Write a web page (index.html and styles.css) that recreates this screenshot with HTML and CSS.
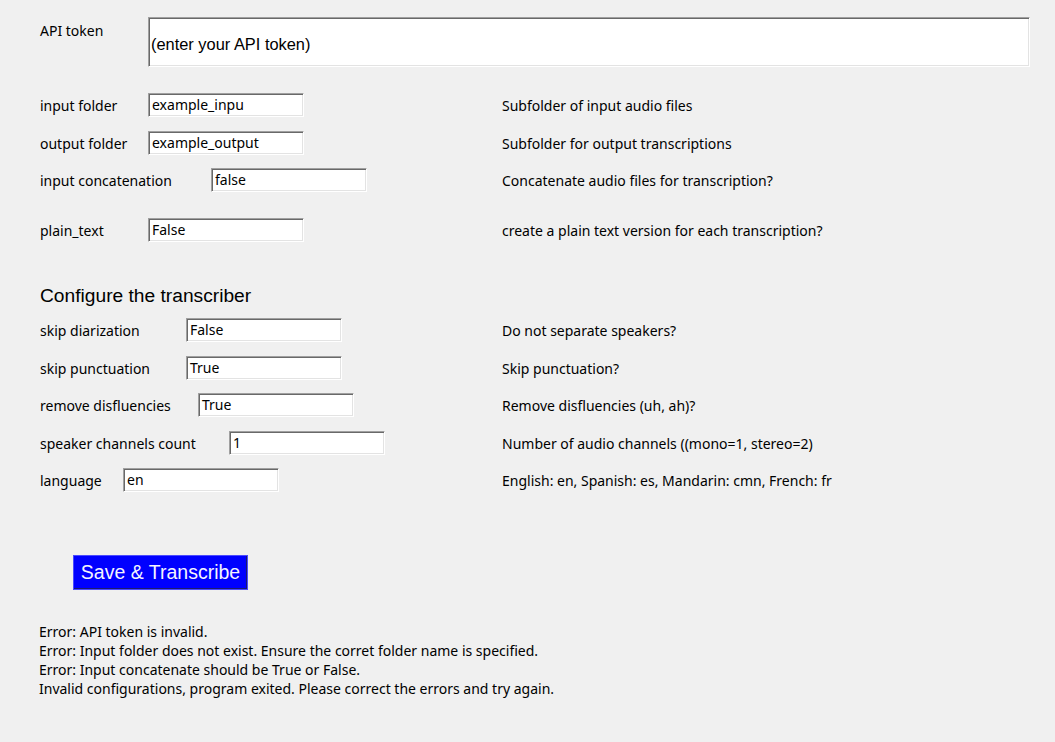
FILE: index.html
```html
<!DOCTYPE html>
<html>
<head>
<meta charset="utf-8">
<link rel="stylesheet" href="styles.css">
</head>
<body>
<div class="page">
  <div class="api-row">
    <div class="api-label">API token</div>
    <div class="entry entry-big">(enter your API token)</div>
  </div>

  <div class="row r1">
    <div class="left"><span class="lbl w108">input folder</span><div class="entry">example_inpu</div></div>
    <div class="desc">Subfolder of input audio files</div>
  </div>
  <div class="row r2">
    <div class="left"><span class="lbl w108">output folder</span><div class="entry">example_output</div></div>
    <div class="desc">Subfolder for output transcriptions</div>
  </div>
  <div class="row r3">
    <div class="left"><span class="lbl w171">input concatenation</span><div class="entry">false</div></div>
    <div class="desc">Concatenate audio files for transcription?</div>
  </div>
  <div class="row r4">
    <div class="left"><span class="lbl w108">plain_text</span><div class="entry">False</div></div>
    <div class="desc">create a plain text version for each transcription?</div>
  </div>

  <h2 class="heading">Configure the transcriber</h2>

  <div class="row r5">
    <div class="left"><span class="lbl w146">skip diarization</span><div class="entry">False</div></div>
    <div class="desc">Do not separate speakers?</div>
  </div>
  <div class="row r6">
    <div class="left"><span class="lbl w146">skip punctuation</span><div class="entry">True</div></div>
    <div class="desc">Skip punctuation?</div>
  </div>
  <div class="row r7">
    <div class="left"><span class="lbl w158">remove disfluencies</span><div class="entry">True</div></div>
    <div class="desc">Remove disfluencies (uh, ah)?</div>
  </div>
  <div class="row r8">
    <div class="left"><span class="lbl w189">speaker channels count</span><div class="entry">1</div></div>
    <div class="desc">Number of audio channels ((mono=1, stereo=2)</div>
  </div>
  <div class="row r9">
    <div class="left"><span class="lbl w83">language</span><div class="entry">en</div></div>
    <div class="desc">English: en, Spanish: es, Mandarin: cmn, French: fr</div>
  </div>

  <div class="btn-wrap"><button class="btn">Save &amp; Transcribe</button></div>

  <div class="errors">
    <div>Error: API token is invalid.</div>
    <div>Error: Input folder does not exist. Ensure the corret folder name is specified.</div>
    <div>Error: Input concatenate should be True or False.</div>
    <div>Invalid configurations, program exited. Please correct the errors and try again.</div>
  </div>
</div>
</body>
</html>
```

FILE: styles.css
```css
html, body {
  margin: 0;
  padding: 0;
  background: #f0f0f0;
}
body {
  width: 1055px;
  height: 742px;
  overflow: hidden;
  font-family: "Noto Sans", "Open Sans", sans-serif;
  font-size: 14px;
  color: #000;
}
.page {
  padding: 17px 0 0 40px;
}
.api-row {
  display: flex;
  align-items: flex-start;
}
.api-label {
  width: 108px;
  padding-top: 5px;
  line-height: 18px;
}
.entry {
  box-sizing: border-box;
  width: 156px;
  height: 24px;
  background: #fff;
  border-top: 1px solid #a0a0a0;
  border-left: 1px solid #a0a0a0;
  border-right: 1px solid #ffffff;
  border-bottom: 1px solid #ffffff;
  box-shadow: inset 1px 1px 0 #696969, inset -1px -1px 0 #e3e3e3;
  padding: 0 3px;
  line-height: 22px;
  white-space: nowrap;
  overflow: hidden;
}
.entry-big {
  width: 882px;
  height: 50px;
  line-height: 52px;
  font-family: "Liberation Sans", Arial, sans-serif;
  font-size: 16.4px;
  padding-left: 2px;
}
.row {
  display: flex;
  align-items: center;
  height: 24px;
}
.r1 { margin-top: 26px; }
.r2 { margin-top: 14px; }
.r3 { margin-top: 13px; }
.r4 { margin-top: 26px; }
.r5 { margin-top: 0; }
.r6 { margin-top: 14px; }
.r7 { margin-top: 13px; }
.r8 { margin-top: 14px; }
.r9 { margin-top: 13px; }
.left {
  width: 462px;
  display: flex;
  align-items: center;
}
.lbl { display: block; white-space: nowrap; }
.w83 { width: 83px; }
.w108 { width: 108px; }
.w146 { width: 146px; }
.w158 { width: 158px; }
.w171 { width: 171px; }
.w189 { width: 189px; }
.desc { white-space: nowrap; }
.heading {
  margin: 42px 0 0 0;
  height: 34px;
  line-height: 24px;
  font-family: "Liberation Sans", Arial, sans-serif;
  font-weight: normal;
  font-size: 19.2px;
  color: #000;
}
.btn-wrap {
  margin-top: 63px;
  padding-left: 33px;
}
.btn {
  box-sizing: border-box;
  width: 175px;
  height: 35px;
  background: #0000ff;
  color: #f4f4ff;
  font-family: "Liberation Sans", Arial, sans-serif;
  font-size: 19.5px;
  border: 1px solid #4a4aff;
  box-shadow: inset -1px -1px 0 #1a1a70;
  padding: 0;
  margin: 0;
  line-height: 33px;
}
.errors {
  margin-top: 32px;
  margin-left: -1px;
  line-height: 19px;
}
```
